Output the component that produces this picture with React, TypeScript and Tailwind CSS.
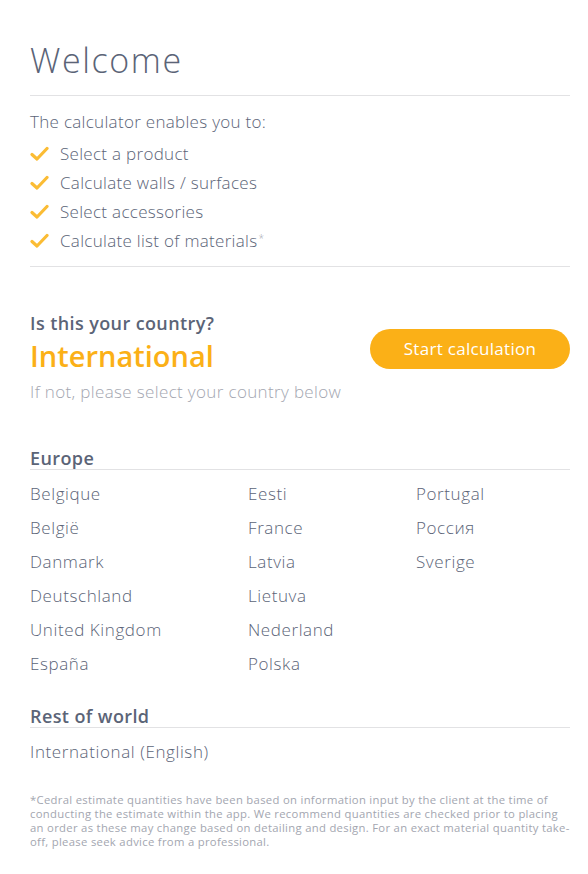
import React from "react";

const Check = () => (
  <svg width="19" height="16" viewBox="0 0 19 16" className="shrink-0">
    <path d="M2 8.5 L7 13 L17 2.5" fill="none" stroke="#fbbc34" strokeWidth="3.2" strokeLinecap="round" strokeLinejoin="round" />
  </svg>
);

const europe = [
  ["Belgique", "Eesti", "Portugal"],
  ["België", "France", "Россия"],
  ["Danmark", "Latvia", "Sverige"],
  ["Deutschland", "Lietuva", ""],
  ["United Kingdom", "Nederland", ""],
  ["España", "Polska", ""],
];

export default function App() {
  return (
    <div className="w-[588px] min-h-[874px] bg-white pl-[30px] pr-[18px] pt-[40px] pb-[20px] text-[#5b6477] font-light" style={{ fontFamily: '"Open Sans", "Liberation Sans", sans-serif' }}>
      <h1 className="text-[34px] leading-[40px] font-light tracking-[1.6px]">Welcome</h1>
      <div className="mt-[15px] border-t border-[#e2e2e4]" />
      <p className="mt-[14px] text-[17px] leading-[24px] tracking-[0.3px]">The calculator enables you to:</p>
      <ul className="mt-[5px]">
        {["Select a product", "Calculate walls / surfaces", "Select accessories", "Calculate list of materials"].map((t, i) => (
          <li key={t} className="h-[29px] flex items-center gap-[11px] text-[17px] tracking-[0.3px]">
            <Check />
            <span>
              {t}
              {i === 3 && <sup className="text-[10px] text-[#a3a6b0] ml-[1px]">*</sup>}
            </span>
          </li>
        ))}
      </ul>
      <div className="mt-[11px] border-t border-[#e2e2e4]" />
      <div className="mt-[44px] flex items-start justify-between">
        <div>
          <p className="text-[18px] leading-[24px] font-semibold tracking-[0.4px]">Is this your country?</p>
          <p className="mt-[3px] text-[29px] leading-[36px] font-semibold text-[#fbb017]">International</p>
          <p className="mt-[6px] text-[17px] leading-[24px] tracking-[0.35px] text-[#a3a6b0]">If not, please select your country below</p>
        </div>
        <button className="mt-[18px] w-[200px] h-[40px] rounded-full bg-[#fbb017] text-white text-[17px] font-normal tracking-[0.3px]">Start calculation</button>
      </div>
      <h2 className="mt-[43px] text-[18px] leading-[22px] font-semibold tracking-[0.4px] border-b border-[#e2e2e4]">Europe</h2>
      <div className="mt-[7px] grid grid-cols-[218px_168px_1fr]">
        {europe.flat().map((c, i) => (
          <div key={i} className="h-[34px] flex items-center text-[17px] tracking-[0.6px]">{c}</div>
        ))}
      </div>
      <h2 className="mt-[24px] text-[18px] leading-[22px] font-semibold tracking-[0.4px] border-b border-[#e2e2e4]">Rest of world</h2>
      <div className="mt-[7px] h-[34px] flex items-center text-[17px] tracking-[0.6px]">International (English)</div>
      <p className="mt-[24px] text-[11.3px] leading-[14px] tracking-[0.3px] text-[#a3a6b0] font-normal">
        *Cedral estimate quantities have been based on information input by the client at the time of conducting the estimate within the app. We recommend quantities are checked prior to placing an order as these may change based on detailing and design. For an exact material quantity take-off, please seek advice from a professional.
      </p>
    </div>
  );
}
